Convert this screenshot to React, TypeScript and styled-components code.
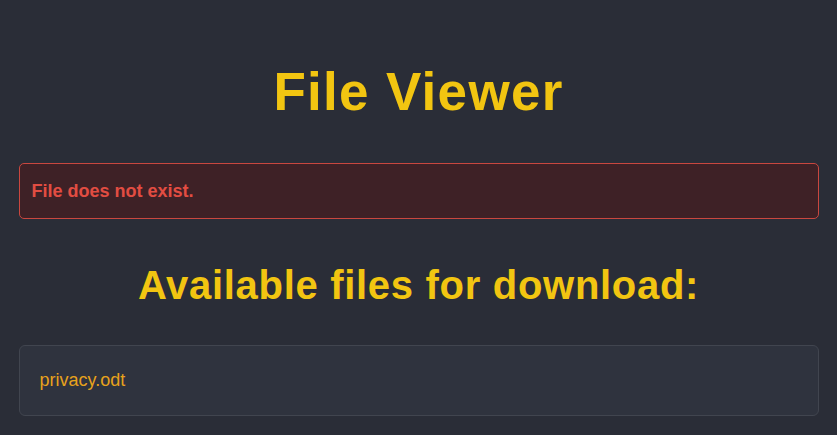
import styled, { createGlobalStyle } from "styled-components";

const GlobalStyle = createGlobalStyle`
  html, body {
    margin: 0;
    padding: 0;
    background-color: #2a2d37;
    font-family: "Liberation Sans", Arial, sans-serif;
  }
`;

const Container = styled.div`
  max-width: 800px;
  margin: 0 auto;
  padding: 62px 0 20px;
  display: flex;
  flex-direction: column;
`;

const Title = styled.h1`
  margin: 0 0 41px;
  font-size: 53px;
  line-height: 60px;
  font-weight: 700;
  letter-spacing: 1.3px;
  text-align: center;
  color: #f2c511;
`;

const ErrorBox = styled.div`
  padding: 15px 12px;
  line-height: 24px;
  font-size: 18px;
  font-weight: 700;
  color: #e24d42;
  background-color: #3e2126;
  border: 1px solid #c9473f;
  border-radius: 5px;
  margin-bottom: 43px;
`;

const SubTitle = styled.h2`
  margin: 0 0 37px;
  font-size: 40px;
  line-height: 46px;
  font-weight: 700;
  letter-spacing: 0.7px;
  text-align: center;
  color: #f2c511;
`;

const FileList = styled.ul`
  list-style: none;
  margin: 0;
  padding: 0;
  display: flex;
  flex-direction: column;
  gap: 12px;
`;

const FileItem = styled.li`
  padding: 20px;
  background-color: #2f333e;
  border: 1px solid #41454f;
  border-radius: 6px;
  a {
    color: #e8a21c;
    text-decoration: none;
    font-size: 18px;
    line-height: 29px;
  }
`;

const files = ["privacy.odt"];

function App() {
  return (
    <>
      <GlobalStyle />
      <Container>
        <Title>File Viewer</Title>
        <ErrorBox>File does not exist.</ErrorBox>
        <SubTitle>Available files for download:</SubTitle>
        <FileList>
          {files.map((f) => (
            <FileItem key={f}>
              <a href={`?file=${f}`}>{f}</a>
            </FileItem>
          ))}
        </FileList>
      </Container>
    </>
  );
}

export default App;
